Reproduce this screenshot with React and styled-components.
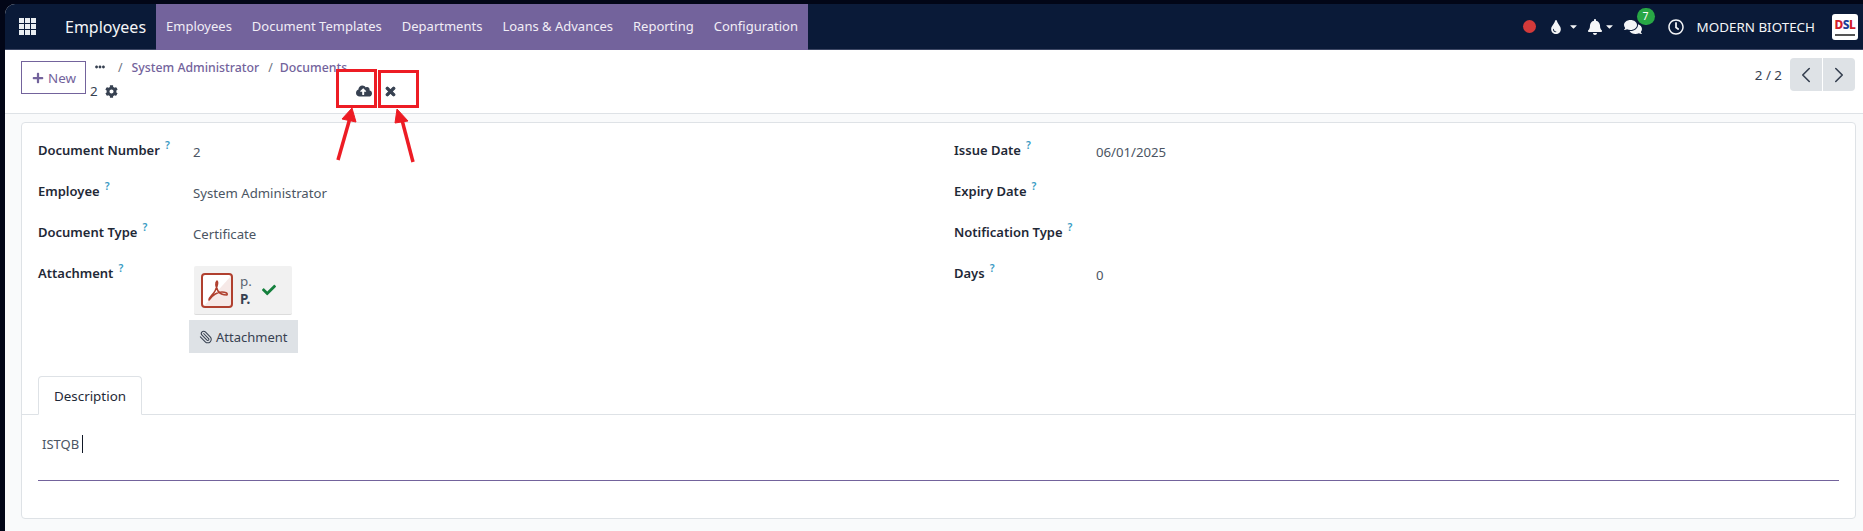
import React from 'react';
import styled, { createGlobalStyle } from 'styled-components';
import { FaPlus, FaCog, FaCloudUploadAlt, FaTimes, FaCheck, FaTint, FaBell, FaComments, FaRegClock, FaEllipsisH, FaCaretDown } from 'react-icons/fa';
import { FiChevronLeft, FiChevronRight } from 'react-icons/fi';
import { Paperclip } from 'lucide-react';

const GlobalStyle = createGlobalStyle`
  html, body { margin: 0; padding: 0; background: #020617; }
  body { font-family: "Noto Sans", "Open Sans", sans-serif; font-size: 13px; color: #374151; }
  * { box-sizing: border-box; }
`;

const Frame = styled.div`
  position: relative;
  width: 1863px;
  height: 531px;
  padding: 4px 0 0 5px;
  background: #020617;
  overflow: hidden;
`;

const Screen = styled.div`
  height: 527px;
  background: #f9fafb;
  border-top-left-radius: 10px;
  overflow: hidden;
`;

const Navbar = styled.nav`
  display: flex;
  align-items: center;
  height: 46px;
  background: #0a1a38;
  border-bottom: 1px solid #3d4764;
  color: #fff;
`;

const AppsIcon = styled.div`
  display: grid;
  grid-template-columns: repeat(3, 5px);
  grid-auto-rows: 5px;
  gap: 1px;
  margin-left: 14px;
  span { background: #e9edf1; }
`;

const Brand = styled.div`
  margin-left: 29px;
  width: 91px;
  font-size: 16px;
  color: #f4f5f7;
`;

const MenuStrip = styled.div`
  display: flex;
  height: 46px;
  padding: 0 0 1px;
  background: #73639c;
`;

const MenuItem = styled.a`
  display: flex;
  align-items: center;
  padding: 0 10px;
  font-size: 13px;
  color: #f1edf6;
`;

const Systray = styled.div`
  display: flex;
  align-items: center;
  margin-left: auto;
  height: 100%;
  padding-right: 5px;
  color: #f4f5f7;
`;

const RedDot = styled.span`
  width: 13px;
  height: 13px;
  border-radius: 50%;
  background: #d33a3a;
  margin-right: 13px;
`;

const TrayIcon = styled.span`
  position: relative;
  display: inline-flex;
  align-items: center;
  margin-right: ${p => p.$gap}px;
  svg { display: block; }
`;

const Badge = styled.span`
  position: absolute;
  top: -10px;
  left: 13px;
  width: 18px;
  height: 17px;
  border-radius: 9px;
  background: #28a745;
  color: #fff;
  font-size: 10.5px;
  line-height: 16px;
  text-align: center;
`;

const Company = styled.span`
  margin-right: 17px;
  font-size: 13.4px;
`;

const CompanyLogo = styled.div`
  position: relative;
  display: flex;
  justify-content: center;
  width: 26px;
  height: 26px;
  padding-top: 5px;
  border-radius: 3px;
  background: #fff;
  color: #d2202a;
  font-size: 12px;
  font-weight: 800;
  letter-spacing: -0.5px;
  line-height: 1;
  b { color: #1a3f9a; font-weight: 800; }
  &::after {
    content: '';
    position: absolute;
    left: 3px;
    right: 3px;
    bottom: 4px;
    height: 2px;
    background: #555;
  }
`;

const ControlPanel = styled.div`
  display: flex;
  height: 64px;
  padding: 7px 8px 0 16px;
  background: #fff;
  border-bottom: 1px solid #dee2e6;
`;

const NewButton = styled.button`
  display: flex;
  align-items: center;
  gap: 4px;
  width: 65px;
  height: 33px;
  margin-top: 4px;
  padding: 0 0 0 10px;
  background: #fff;
  border: 1px solid #73639c;
  color: #73639c;
  font: inherit;
  font-size: 13.4px;
`;

const Crumbs = styled.div`
  display: flex;
  flex-direction: column;
  margin-left: 4px;
`;

const CrumbLine = styled.div`
  display: flex;
  align-items: center;
  height: 18px;
  margin-top: 1px;
  padding-left: 5px;
  color: #73639c;
  font-size: 12.3px;
  font-weight: 500;
`;

const CrumbSep = styled.span`
  margin: 0 ${p => p.$right}px 0 ${p => p.$left}px;
  color: #6b7280;
  font-weight: 400;
`;

const RecordLine = styled.div`
  display: flex;
  align-items: center;
  height: 22px;
  margin-top: 4px;
  font-size: 13.4px;
  color: #374151;
`;

const GearWrap = styled.span`
  display: inline-flex;
  margin-left: 7px;
  color: #374151;
`;

const SaveIcon = styled.span`
  display: inline-flex;
  margin-left: ${p => p.$left}px;
  color: #374151;
`;

const Pager = styled.div`
  display: flex;
  align-items: flex-start;
  margin-left: auto;
  gap: 8px;
  font-size: 13.4px;
`;

const PagerText = styled.span`
  margin-top: 9px;
  color: #374151;
`;

const PagerButtons = styled.div`
  display: flex;
  gap: 1px;
  margin-top: 1px;
`;

const PagerButton = styled.button`
  display: flex;
  align-items: center;
  justify-content: center;
  width: 32px;
  height: 33px;
  padding: 0;
  border: 0;
  background: #dee2e6;
  color: #374151;
  border-radius: ${p => (p.$side === 'left' ? '4px 0 0 4px' : '0 4px 4px 0')};
`;

const Sheet = styled.div`
  width: 1835px;
  height: 397px;
  margin: 8px 0 0 16px;
  padding-top: 11px;
  background: #fff;
  border: 1px solid #dee2e6;
  border-radius: 4px;
`;

const FormGrid = styled.div`
  display: grid;
  grid-template-columns: 916px 1fr;
  padding-left: 16px;
`;

const Row = styled.div`
  display: flex;
  align-items: flex-start;
  min-height: 41px;
  padding-top: 7px;
`;

const Label = styled.div`
  width: ${p => p.$width}px;
  flex-shrink: 0;
  font-size: 13px;
  font-weight: 600;
  color: #1f2937;
  line-height: 18px;
`;

const Help = styled.sup`
  margin-left: 5px;
  font-size: 10.5px;
  font-weight: 600;
  color: #3b9bc4;
  vertical-align: 6px;
  line-height: 0;
`;

const Value = styled.div`
  padding-top: 2px;
  font-size: 13.2px;
  color: #4b5563;
  line-height: 18px;
`;

const AttachmentColumn = styled.div`
  margin-left: -4px;
  margin-top: 2px;
  display: flex;
  flex-direction: column;
`;

const FileCard = styled.div`
  display: flex;
  align-items: center;
  width: 98px;
  height: 49px;
  margin-left: 5px;
  padding-left: 7px;
  background: #f1f1f1;
  border-bottom: 1px solid #dcdcdc;
  border-radius: 2px;
`;

const FileText = styled.div`
  margin-left: 7px;
  width: 22px;
  font-size: 13.4px;
  line-height: 18px;
  color: #5b6472;
  b { display: block; color: #374151; font-weight: 700; }
`;

const AttachButton = styled.button`
  display: flex;
  align-items: center;
  gap: 3px;
  width: 109px;
  height: 33px;
  margin-top: 5px;
  padding: 0 0 0 10px;
  border: 0;
  background: #dee2e6;
  color: #374151;
  font: inherit;
  font-size: 13px;
`;

const ClipIcon = styled(Paperclip)`
  transform: scaleX(-1);
`;

const TabBar = styled.div`
  display: flex;
  height: 39px;
  margin-top: 23px;
  padding-left: 16px;
  border-bottom: 1px solid #dee2e6;
`;

const Tab = styled.div`
  width: 104px;
  height: 39px;
  padding-top: 10px;
  text-align: center;
  background: #fff;
  border: 1px solid #dee2e6;
  border-bottom: 1px solid #fff;
  border-radius: 4px 4px 0 0;
  font-size: 13.4px;
  color: #1f2937;
`;

const Editor = styled.div`
  margin: 0 16px;
  height: 66px;
  padding: 20px 4px 0;
  border-bottom: 1px solid #73639c;
  font-size: 13px;
  line-height: 18px;
  color: #4b5563;
`;

const Caret = styled.span`
  display: inline-block;
  width: 1px;
  height: 18px;
  margin-left: 3px;
  vertical-align: top;
  background: #111827;
`;

// the red marks somebody drew over the screenshot
const MarkBox = styled.div`
  position: absolute;
  left: ${p => p.$x}px;
  top: ${p => p.$y}px;
  width: ${p => p.$w}px;
  height: ${p => p.$h}px;
  border: 3px solid #ed1c24;
`;

const Arrows = styled.svg`
  position: absolute;
  left: 330px;
  top: 100px;
`;

const menu = ['Employees', 'Document Templates', 'Departments', 'Loans & Advances', 'Reporting', 'Configuration'];

const PdfIcon = () => (
  <svg width="32" height="35" viewBox="0 0 32 35">
    <rect x="1" y="1" width="30" height="33" rx="3" fill="#fff" />
    <path d="M3 33 L30 3 V31 a2 2 0 0 1 -2 2 Z" fill="#f6e9e7" />
    <rect x="1" y="1" width="30" height="33" rx="3" fill="none" stroke="#b0402f" strokeWidth="2" />
    <path d="M16 8 C14 10 15 14 17 18 C19 21 22 22 26 22 C27 20 24 19 21 19 C16 19 11 23 8 27 C8 24 12 22 14 18 C16 14 18 10 16 8 Z" fill="none" stroke="#b0402f" strokeWidth="1.6" strokeLinejoin="round" />
  </svg>
);

const FormField = ({ label, width, children }) => (
  <Row>
    <Label $width={width}>{label}<Help>?</Help></Label>
    {children}
  </Row>
);

function App() {
  return (
    <Frame>
      <GlobalStyle />
      <Screen>
        <Navbar>
          <AppsIcon>
            {Array.from({ length: 9 }).map((_, i) => <span key={i} />)}
          </AppsIcon>
          <Brand>Employees</Brand>
          <MenuStrip>
            {menu.map(item => <MenuItem key={item}>{item}</MenuItem>)}
          </MenuStrip>
          <Systray>
            <RedDot />
            <TrayIcon $gap={5}><FaTint size={14} /></TrayIcon>
            <TrayIcon $gap={8}><FaCaretDown size={11} /></TrayIcon>
            <TrayIcon $gap={1}><FaBell size={16} /></TrayIcon>
            <TrayIcon $gap={9}><FaCaretDown size={11} /></TrayIcon>
            <TrayIcon $gap={26}><FaComments size={18} /><Badge>7</Badge></TrayIcon>
            <TrayIcon $gap={13}><FaRegClock size={16} /></TrayIcon>
            <Company>MODERN BIOTECH</Company>
            <CompanyLogo>D<b>S</b>L</CompanyLogo>
          </Systray>
        </Navbar>

        <ControlPanel>
          <NewButton><FaPlus size={12} />New</NewButton>
          <Crumbs>
            <CrumbLine>
              <FaEllipsisH size={10} color="#374151" />
              <CrumbSep $left={13} $right={9}>/</CrumbSep>
              System Administrator
              <CrumbSep $left={9} $right={7}>/</CrumbSep>
              Documents
            </CrumbLine>
            <RecordLine>
              2
              <GearWrap><FaCog size={13} /></GearWrap>
              <SaveIcon $left={238}><FaCloudUploadAlt size={16} /></SaveIcon>
              <SaveIcon $left={12}><FaTimes size={13} stroke="currentColor" strokeWidth={40} /></SaveIcon>
            </RecordLine>
          </Crumbs>
          <Pager>
            <PagerText>2 / 2</PagerText>
            <PagerButtons>
              <PagerButton $side="left"><FiChevronLeft size={26} strokeWidth={1.5} /></PagerButton>
              <PagerButton $side="right"><FiChevronRight size={26} strokeWidth={1.5} /></PagerButton>
            </PagerButtons>
          </Pager>
        </ControlPanel>

        <Sheet>
          <FormGrid>
            <div>
              <FormField label="Document Number" width={155}><Value>2</Value></FormField>
              <FormField label="Employee" width={155}><Value>System Administrator</Value></FormField>
              <FormField label="Document Type" width={155}><Value>Certificate</Value></FormField>
              <FormField label="Attachment" width={155}>
                <AttachmentColumn>
                  <FileCard>
                    <PdfIcon />
                    <FileText>p.<b>P.</b></FileText>
                    <FaCheck size={14} color="#15803d" />
                  </FileCard>
                  <AttachButton><ClipIcon size={14} strokeWidth={1.8} />Attachment</AttachButton>
                </AttachmentColumn>
              </FormField>
            </div>
            <div>
              <FormField label="Issue Date" width={142}><Value>06/01/2025</Value></FormField>
              <FormField label="Expiry Date" width={142} />
              <FormField label="Notification Type" width={142} />
              <FormField label="Days" width={142}><Value>0</Value></FormField>
            </div>
          </FormGrid>
          <TabBar><Tab>Description</Tab></TabBar>
          <Editor>ISTQB<Caret /></Editor>
        </Sheet>
      </Screen>

      <MarkBox $x={336} $y={69} $w={41} $h={39} />
      <MarkBox $x={378} $y={70} $w={41} $h={38} />
      <Arrows width="100" height="65" viewBox="0 0 100 65">
        <path d="M8 60 L20 18" stroke="#ed1c24" strokeWidth="3.5" fill="none" />
        <path d="M12 19 L22 8 L26 22 Z" fill="#ed1c24" stroke="#ed1c24" />
        <path d="M83 62 L72 20" stroke="#ed1c24" strokeWidth="3.5" fill="none" />
        <path d="M65 23 L67 9 L78 21 Z" fill="#ed1c24" stroke="#ed1c24" />
      </Arrows>
    </Frame>
  );
}

export default App;
